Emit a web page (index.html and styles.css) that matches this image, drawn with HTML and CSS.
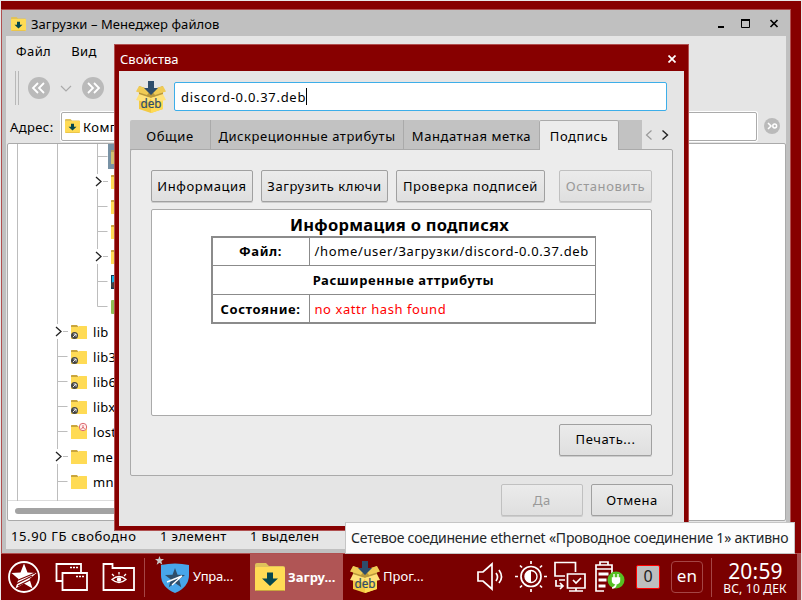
FILE: index.html
```
<!DOCTYPE html>
<html lang="ru">
<head>
<meta charset="utf-8">
<title>Свойства</title>
<link rel="stylesheet" href="styles.css">
</head>
<body>
<svg width="0" height="0" class="defs">
  <symbol id="folder" viewBox="0 0 16 14"><path d="M0 2V.5Q0 0 .5 0H6l1.500 2z" fill="#c9a53d"/><path d="M0 2h7l1-1h7.500q.5 0 .5.5v12q0 .5-.5.5H.5q-.5 0-.5-.5z" fill="#ffdb55"/></symbol>
  <symbol id="dlfolder" viewBox="0 0 30 28"><path d="M0 5V2q0-2 2-2h9l3 3h14q2 0 2 2v3H0z" fill="#dfc25b"/><rect y="4" width="30" height="24" rx="1.500" fill="#ffdb55"/><path d="M1 27.500h28" stroke="#c9a53d"/><path d="M12 9.500h6v6h5l-8 7.500-8-7.500h5z" fill="#06484f"/></symbol>
  <symbol id="deb" viewBox="0 0 30 32"><path d="M3 5 15 9l12-4v9l-12 4-12-4z" fill="#b9983c"/><path d="M3 5 0 10.500l11 3.500 4-5zM27 5l3 5.500L19 14l-4-5z" fill="#f0cb55"/><path d="m3 14 12 3 12-3v14l-12 4-12-4z" fill="#f3ca43"/><path d="M15 17v15l12-4V14z" fill="#ffdb55"/><path d="m3 13-3 6 12 2.500 3-4 3 4L30 19l-3-6-12 4z" fill="#ffe27a"/><path d="M12 0h6v7h4l-7 7-7-7h4z" fill="#2e4d6b"/><text x="15" y="27" text-anchor="middle" textLength="21" lengthAdjust="spacingAndGlyphs" class="deb-text">deb</text></symbol>
  <symbol id="link" viewBox="0 0 7 7"><circle cx="3.500" cy="3.500" r="3.500" fill="#444"/><path d="m1.800 5.200 3-3M2.500 2h2.600v2.600" fill="none" stroke="#fff" stroke-width=".9"/></symbol>
  <symbol id="star" viewBox="0 0 24 24"><path d="m12 0 3 8 9 .3-7 5.600 2.500 9.100-7.500-5-7.500 5L7 13.900 0 8.300 9 8z" fill="currentColor"/></symbol>
</svg>

<section class="window">
  <header class="title">
    <svg class="title-icon"><use href="#dlfolder"/></svg>
    <span class="t-title">Загрузки – Менеджер файлов</span>
    <svg class="controls" width="58" height="12" viewBox="0 0 58 12"><path d="M1 9h6" stroke="#000" stroke-width="2"/><path d="M24.500 2v7.500h8V2" fill="none" stroke="#000"/><path d="M24 2h9" stroke="#000" stroke-width="2"/><path d="m53.500 2 7 7m0-7-7 7" stroke="#000" stroke-width="1.700"/></svg>
  </header>
  <div class="client">
    <nav class="menu"><span>Файл</span><span>Вид</span></nav>
    <div class="tools">
      <i class="grip"></i>
      <svg width="76" height="22" viewBox="0 0 76 22"><circle cx="11" cy="11" r="11" fill="#bababa"/><circle cx="65" cy="11" r="11" fill="#bababa"/><path d="m10 6-5 5 5 5m6-10-5 5 5 5M60 6l5 5-5 5m6-10 5 5-5 5" fill="none" stroke="#fff" stroke-width="1.800"/><path d="m33 9 5 5 5-5" fill="none" stroke="#aaa" stroke-width="1.200"/></svg>
    </div>
    <div class="address">
      <span class="t-addr">Адрес:</span>
      <div class="field"><svg width="15" height="14"><use href="#dlfolder"/></svg><span>Комп</span></div>
      <svg width="16" height="16" viewBox="0 0 16 16"><circle cx="8" cy="8" r="8" fill="#bababa"/><path d="m4 5 3 3-3 3" fill="none" stroke="#fff" stroke-width="1.500"/><circle cx="10.700" cy="8" r="1.900" fill="none" stroke="#fff" stroke-width="1.500"/></svg>
    </div>
    <div class="tree">
      <svg class="lines" width="108" height="357" viewBox="0 0 108 357"><path d="M9.500 0v357M49.500 0v357M89.500 0v162.500h10M89.500 12.500h10M89.500 62.500h10M89.500 87.500h10M89.500 137.500h10M95 37.500h5M95 112.500h5M55 187.500h5M49.500 212.500h10M49.500 237.500h10M49.500 262.500h10M49.500 287.500h10M55 312.500h5M49.500 337.500h10" fill="none" stroke="#bdbdbd"/><path d="M48 180h6v15h-6zM48 305h6v15h-6zM88 30h6v15h-6zM88 105h6v15h-6z" fill="#fff"/><path d="m48 183 5 4.500-5 4.500M48 308l5 4.500-5 4.500M88 33l5 4.500-5 4.500M88 108l5 4.500-5 4.500" fill="none" stroke="#222" stroke-width="1.300"/></svg>
      <div class="rows">
        <div class="row deep selected"><svg><use href="#folder" opacity=".65"/></svg></div>
        <div class="row deep"><svg><use href="#folder"/></svg></div>
        <div class="row deep"><svg><use href="#folder"/></svg></div>
        <div class="row deep"><svg><use href="#folder"/></svg></div>
        <div class="row deep"><svg><use href="#folder"/></svg></div>
        <div class="row deep"><svg><rect width="16" height="14" fill="#123c54"/><path d="M1 1h14v7H1z" fill="#1cb5e8"/><circle cx="3" cy="10" r="3" fill="#444"/></svg></div>
        <div class="row deep"><svg><rect width="16" height="14" rx="1" fill="#8fbe55"/></svg></div>
        <div class="row"><svg><use href="#folder"/><use href="#link" y="7" width="7" height="7"/></svg><span>lib</span></div>
        <div class="row"><svg><use href="#folder"/><use href="#link" y="7" width="7" height="7"/></svg><span>lib3</span></div>
        <div class="row"><svg><use href="#folder"/><use href="#link" y="7" width="7" height="7"/></svg><span>lib6</span></div>
        <div class="row"><svg><use href="#folder"/><use href="#link" y="7" width="7" height="7"/></svg><span>libx</span></div>
        <div class="row"><svg><use href="#folder"/><circle cx="12" cy="2" r="3.700" fill="#fff0ee" stroke="#dc6870" stroke-width="1"/><path d="M12 0v2m-1.500 2L12 2l1.500 2" stroke="#dc6870" fill="none"/></svg><span>lost</span></div>
        <div class="row"><svg><use href="#folder"/></svg><span>me</span></div>
        <div class="row"><svg><use href="#folder"/></svg><span>mn</span></div>
        <div class="row"><svg><use href="#folder"/></svg></div>
      </div>
      <div class="scroll"><i></i></div>
    </div>
    <footer class="status"><span class="s1">15.90 ГБ свободно</span><span class="s2">1 элемент</span><span>1 выделен</span></footer>
  </div>
</section>

<section class="dialog">
  <header class="dtitle"><span>Свойства</span><svg width="8" height="8" viewBox="0 0 8 8"><path d="m.5.5 7 7m0-7-7 7" stroke="#fff" stroke-width="1.700"/></svg></header>
  <div class="dbody">
    <div class="name"><svg width="30" height="32"><use href="#deb"/></svg><div class="input"><span>discord-0.0.37.deb</span><i></i></div></div>
    <div class="tabbar">
      <div class="tab a">Общие</div><div class="tab b">Дискреционные атрибуты</div><div class="tab c">Мандатная метка</div><div class="tab on">Подпись</div><div class="rest"></div>
      <svg width="30" height="30" viewBox="0 0 30 30"><path d="m9.500 10.500-5 4.500 5 4.500" fill="none" stroke="#999" stroke-width="1.200"/><path d="m20.500 10.500 5 4.500-5 4.500" fill="none" stroke="#222" stroke-width="1.400"/></svg>
    </div>
    <div class="pane">
      <div class="buttons"><div class="btn b1">Информация</div><div class="btn b2">Загрузить ключи</div><div class="btn b3">Проверка подписей</div><div class="btn b4 off">Остановить</div></div>
      <div class="report">
        <h1>Информация о подписях</h1>
        <div class="grid">
          <b>Файл:</b><span>/home/user/Загрузки/discord-0.0.37.deb</span>
          <b class="wide">Расширенные аттрибуты</b>
          <b class="low">Состояние:</b><span class="red low">no xattr hash found</span>
        </div>
      </div>
      <div class="btn print">Печать...</div>
    </div>
    <div class="actions"><div class="btn off">Да</div><div class="btn cancel">Отмена</div></div>
  </div>
</section>

<footer class="taskbar">
  <svg class="start" width="128" height="34" viewBox="0 0 128 34" fill="none" stroke="#fff" stroke-width="1.800">
    <circle cx="16" cy="17" r="15"/><path d="m16 3.500 3.500 9 9 .5-7 6 3 9.500-8.500-5-8.500 5L10.500 19l-7-6 9-.5z" fill="#fff" stroke="none"/><path d="m8 21 19-8M8 24l16-8M10 26l12-6" stroke="#7a0000" stroke-width="1.100"/>
    <path d="M54 21H48.500V4H73v8M54.500 13H79v17H54.500z"/><path d="M62 7.500h9M68 16.500h9" stroke-dasharray="2 1" stroke-width="1.500"/>
    <path d="M95.500 30V4H104.500v4H126v22z"/><path d="M104 19.500q7-6 14 0-7 6-14 0zM106 16l-2-2M111 14.500V12m5 4 2-2" stroke-width="1.300"/><circle cx="111" cy="19.500" r="2.200" fill="#fff" stroke="none"/>
  </svg>
  <i class="sep"></i>
  <div class="task t1"><svg width="34" height="39" viewBox="0 0 34 39"><use href="#star" width="9" height="9" color="#c8c8c8"/><path d="M6 9q14-3 28 0v10q0 12-14 18Q6 31 6 19z" fill="#48a6ea"/><use href="#star" x="10" y="12" width="20" height="20" color="#2f4e69"/><path d="m12 26 15-6-10 9" fill="none" stroke="#fff" stroke-width="1.400"/></svg><span>Упра...</span></div>
  <div class="task t2"><svg width="30" height="28"><use href="#dlfolder"/></svg><b>Загру...</b></div>
  <div class="task t3"><svg width="30" height="32"><use href="#deb"/></svg><span>Прог...</span></div>
  <svg class="tray" width="148" height="34" viewBox="0 0 148 34" fill="none" stroke="#fff" stroke-width="1.700">
    <path d="M1 12h5l9-8v25l-9-8H1zM19 13q3 4 0 8m3-11q5 7 0 13"/>
    <circle cx="54" cy="16.500" r="10"/><circle cx="54" cy="16.500" r="6" stroke-width="1.400"/><path d="M54 10.500a6 6 0 0 0 0 12z" fill="#fff" stroke="none"/><path d="M54 1v3m0 25v3M38 16.500h3m26 0h3M43 5.500l2 2m18 18 2 2m0-22-2 2m-18 18-2 2"/>
    <path d="M88 16H78V2.500h20.500V12M90.500 14H108v14H90.500zM99 28v3m-7 0h14M79 20v6h6m-2-3 3 3-3 3M82 20h6"/><path d="m96 20 3 3 5-5"/>
    <path d="M127 31h-8V5h16v10M123 5V2h8v3M119 9h16"/><path d="M121.500 14h10M121.500 20h8M121.500 26h7" stroke-width="3"/><circle cx="139" cy="20" r="8.500" fill="#56bf22" stroke="none"/><path d="M135.500 18h7v3q0 2-3.500 3-3.500-1-3.500-3zm1.500 0v-4m4 4v-4m-2 10q0 4-4 4" fill="#fff" stroke-width="1.400"/>
  </svg>
  <div class="zero">0</div><div class="lang">en</div><i class="sep s2"></i>
  <div class="clock"><span class="time">20:59</span><span class="date">ВС, 10 ДЕК</span></div>
  <i class="edge"></i>
</footer>
<div class="tooltip"><span>Сетевое соединение ethernet «Проводное соединение 1» активно</span></div>
</body>
</html>
```
FILE: styles.css
```
* { box-sizing: border-box; }
body { margin: 0; width: 802px; height: 600px; overflow: hidden; position: relative; background: #870000; border: 1px solid #e8e8e8; border-bottom: 0; font: 13px/20px "Noto Sans", sans-serif; letter-spacing: .4px; color: #000; white-space: nowrap; }
svg { display: block; flex: none; }
.defs { position: absolute; }
.deb-text { font-size: 12.5px; font-weight: 400; letter-spacing: 0; fill: #2e4d6b; stroke: #2e4d6b; stroke-width: .2px; }

.window { position: absolute; left: 0; top: 8px; width: 790px; height: 545px; padding: 0 4px 4px; border: 1px solid #b05050; background: #c0c0c0; }
.title { height: 26px; display: flex; align-items: center; padding: 2px 11px 0 5px; }
.title-icon { width: 15px; height: 14px; margin-right: 5px; }
.t-title { letter-spacing: .07px; }
.controls { margin-left: auto; overflow: visible; }
.client { height: 513px; background: #e5e5e5; }
.menu { height: 32px; padding: 5px 10px; display: flex; gap: 20px; }
.tools { height: 39px; padding: 3px 9px; display: flex; gap: 9px; align-items: flex-start; }
.tools svg { margin-top: 6px; }
.grip { width: 4px; height: 34px; border: solid #b8b8b8; border-width: 0 1px; }
.address { height: 36px; display: flex; align-items: center; padding: 2px 5px 0 4px; }
.t-addr { width: 51px; line-height: 22px; padding-top: 2px; }
.field { width: 696px; height: 29px; display: flex; align-items: center; gap: 3px; padding-left: 3px; background: #fff; border: 1px solid #ababab; border-radius: 2px; box-shadow: 0 0 0 1px #fff; line-height: 22px; }
.field span { padding-top: 2px; }
.address > svg { margin-left: 7px; }
.tree { position: relative; width: 779px; height: 378px; margin-left: 1px; border: 1px solid #aaa; border-radius: 2px; background: #fff; }
.lines { position: absolute; left: 0; top: 0; }
.rows { height: 356px; overflow: hidden; width: 400px; }
.row { height: 25px; padding: 0 0 0 63px; display: flex; align-items: center; gap: 6px; }
.row svg { width: 16px; height: 14px; overflow: visible; }
.row span { padding-top: 1px; letter-spacing: .3px; }
.row.deep { padding-left: 103px; }
.selected { background: linear-gradient(#7892a5, #7892a5) 100px 0 no-repeat; }
.scroll { width: 500px; height: 20px; border-top: 1px solid #ddd; padding: 7px 7px; }
.scroll i { display: block; height: 6px; border-radius: 3px; background: #a3a3a3; }
.status { display: flex; height: 27px; padding: 5px 5px; }
.s1 { width: 149px; letter-spacing: .62px; }
.s2 { width: 90px; }

.dialog { position: absolute; left: 113px; top: 43px; width: 575px; height: 487px; border: 1px solid #b05050; background: #870000; padding: 0 4px 4px; letter-spacing: .55px; }
.dtitle { height: 26px; display: flex; align-items: center; justify-content: space-between; padding: 1px 8px 0 1px; color: #fff; letter-spacing: .02px; }
.dbody { height: 455px; background: #e5e5e5; padding: 10px 11px; }
.name { display: flex; gap: 8px; padding-left: 6px; height: 39px; letter-spacing: .7px; }
.input { width: 493px; height: 29px; margin-top: 1px; border: 1px solid #3daee9; border-radius: 2px; background: #fff; display: flex; align-items: center; padding-left: 6px; }
.input i { width: 1px; height: 17px; background: #000; }
.tabbar { display: flex; height: 30px; position: relative; z-index: 1; }
.tab { background: #c2c2c2; border-right: 1px solid #aaa; border-bottom: 1px solid #aaa; text-align: center; line-height: 32px; }
.tab.a { width: 81px; border-radius: 2px 0 0; }
.tab.b { width: 193px; }
.tab.c { width: 135px; border-right: 0; }
.tab.on { width: 80px; border: 1px solid #aaa; border-bottom: 0; border-radius: 2px 2px 0 0; background: #ececec; line-height: 31px; }
.rest { width: 23px; background: #c2c2c2; border-bottom: 1px solid #aaa; }
.pane { margin-top: -1px; width: 543px; height: 327px; border: 1px solid #aaa; border-radius: 2px; background: #ececec; padding: 20px; }
.buttons { display: flex; gap: 8px; }
.btn { height: 32px; border: 1px solid #a0a0a0; border-radius: 2px; background: linear-gradient(#ebebeb, #dfdfdf); box-shadow: 0 1px #ccc; text-align: center; line-height: 31px; }
.btn.off { color: #999; border-color: #c0c0c0; }
.b1 { width: 102px; }
.b2 { width: 127px; }
.b3 { width: 149px; }
.b4 { width: 93px; margin-left: 6px; }
.report { width: 501px; height: 207px; margin-top: 7px; border: 1px solid #aaa; border-radius: 2px; background: #fff; display: flex; flex-direction: column; align-items: center; }
.report h1 { margin: 4px 0 0; padding-right: 4px; font-size: 16.5px; line-height: 22px; letter-spacing: .27px; }
.grid { margin-left: 3px; width: 385px; height: 88px; display: grid; grid-template-columns: 96px 1fr; grid-template-rows: 27px 28px 27px; gap: 1px; border: 2px solid #8b8b8b; border-right-width: 1px; background: #8b8b8b; letter-spacing: .64px; }
.grid > * { background: #fff; padding: 0 5px; line-height: 26px; }
.grid b { text-align: center; letter-spacing: .6px; }
.grid .wide { grid-column: span 2; line-height: 28px; }
.grid .low { line-height: 28px; }
.grid .red { color: #f00; letter-spacing: .57px; }
.print { width: 93px; margin: 8px 0 0 auto; line-height: 29px; }
.actions { display: flex; justify-content: flex-end; gap: 8px; margin-top: 8px; }
.actions .btn { width: 82px; }

.taskbar { position: absolute; left: 0; top: 552px; width: 800px; height: 47px; background: #7a0000; border-top: 1px solid #b05050; display: flex; align-items: center; color: #fff; }
.taskbar > * { flex: none; }
.start { margin-left: 7px; }
.sep { width: 1px; height: 39px; margin: 0 0 0 8px; background: #a54545; }
.task { display: flex; align-items: center; height: 46px; letter-spacing: 0; }
.t1 { width: 105px; padding-left: 10px; gap: 4px; letter-spacing: -.2px; }
.t1 svg { margin-top: -3px; }
.t1 span, .t3 span { padding-bottom: 2px; }
.t2 { width: 93px; padding-left: 5px; gap: 3px; background: #b05555; }
.t3 { width: 100px; padding-left: 7px; gap: 3px; }
.tray { margin-left: 34px; }
.zero { width: 24px; height: 24px; margin-left: 11px; border: 1px solid red; border-radius: 2px; background: #bebebe; color: #222; text-align: center; line-height: 21px; font-size: 16px; letter-spacing: 0; }
.lang { width: 32px; height: 32px; margin-left: 11px; border: 1px solid #a54545; border-radius: 4px; font-size: 17px; text-align: center; line-height: 27px; letter-spacing: .3px; }
.sep.s2 { margin-left: 8px; width: 1px; }
.clock { width: 85px; display: flex; flex-direction: column; align-items: center; letter-spacing: 0; }
.time { font-size: 21px; line-height: 22px; letter-spacing: .2px; padding-left: 2px; }
.date { font-size: 12px; line-height: 13px; letter-spacing: .2px; padding-left: 1px; }
.edge { width: 5px; height: 46px; margin-left: auto; background: #a84c4c; }
.tooltip { position: absolute; left: 344px; top: 521px; width: 450px; height: 32px; border: 1px solid #c5c5c5; background: #fcfcfc; padding: 5px; font-size: 14px; letter-spacing: -.2px; color: #232629; }
```
